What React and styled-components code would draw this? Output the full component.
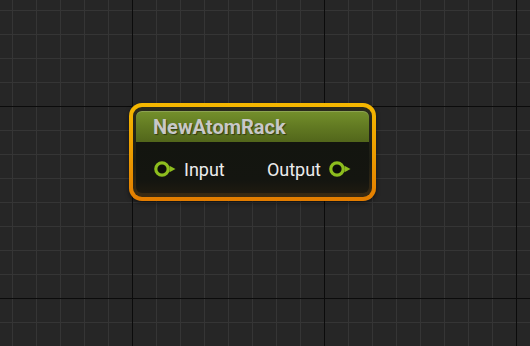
import styled, { createGlobalStyle } from "styled-components";

const GlobalStyle = createGlobalStyle`
  html, body {
    margin: 0;
    padding: 0;
    background: #262626;
    overflow: hidden;
  }
`;

// graph canvas with minor (24px) and major (192px) grid lines
const Canvas = styled.div`
  position: relative;
  width: 530px;
  height: 346px;
  background-color: #262626;
  background-image: linear-gradient(to right, #0b0b0b 1px, transparent 1px),
    linear-gradient(to bottom, #0b0b0b 1px, transparent 1px),
    linear-gradient(to right, #353535 1px, transparent 1px),
    linear-gradient(to bottom, #353535 1px, transparent 1px);
  background-size: 192px 192px, 192px 192px, 24px 24px, 24px 24px;
  background-position: 132px 0, 0 106px, 12px 0, 0 10px;
  font-family: Roboto, "Liberation Sans", sans-serif;
`;

const Node = styled.div`
  position: absolute;
  left: ${(p) => p.x}px;
  top: ${(p) => p.y}px;
  width: 247px;
  box-sizing: border-box;
  padding: 4px;
  border-radius: 13px;
  background: linear-gradient(to bottom, #f5b800 0%, #eb9a00 55%, #e37c00 100%);
  box-shadow: 0 2px 4px rgba(0, 0, 0, 0.5);
`;

const Rim = styled.div`
  padding: 4px 3px 4px 3px;
  border-radius: 9px;
  background: linear-gradient(to bottom, #2a2a1c 0%, #1c1d14 60%, #3a2a12 100%);
`;

const Header = styled.div`
  height: 31px;
  display: flex;
  align-items: center;
  padding-left: 17px;
  border-radius: 6px 6px 0 0;
  background: linear-gradient(to bottom, #74902c 0%, #627a22 50%, #52661b 100%);
  box-shadow: inset 0 1px 0 rgba(255, 255, 255, 0.18);
  color: #c8c8c8;
  font-size: 20px;
  font-weight: 700;
  text-shadow: 1px 1px 1px rgba(0, 0, 0, 0.45);
`;

const Body = styled.div`
  height: 51px;
  display: flex;
  align-items: center;
  justify-content: space-between;
  padding: 3px 18px 0;
  box-sizing: border-box;
  border-radius: 0 0 6px 6px;
  background: linear-gradient(to bottom, #13150f 0%, #141510 75%, #1e1a10 100%);
`;

const Pin = styled.div`
  display: flex;
  align-items: center;
  gap: 8px;
  color: #ececec;
  font-size: 18px;
`;

const PinIcon = () => (
  <svg width="22" height="16" viewBox="0 0 22 16">
    <circle cx="8" cy="8" r="6.2" fill="#0d0e09" stroke="#8dbd1e" strokeWidth="3.2" />
    <path d="M15.5 4.8 L21.5 8 L15.5 11.2 Z" fill="#8dbd1e" />
  </svg>
);

export default function App() {
  return (
    <>
      <GlobalStyle />
      <Canvas>
        <Node x={129} y={103}>
          <Rim>
            <Header>NewAtomRack</Header>
            <Body>
              <Pin>
                <PinIcon />
                Input
              </Pin>
              <Pin>
                Output
                <PinIcon />
              </Pin>
            </Body>
          </Rim>
        </Node>
      </Canvas>
    </>
  );
}
